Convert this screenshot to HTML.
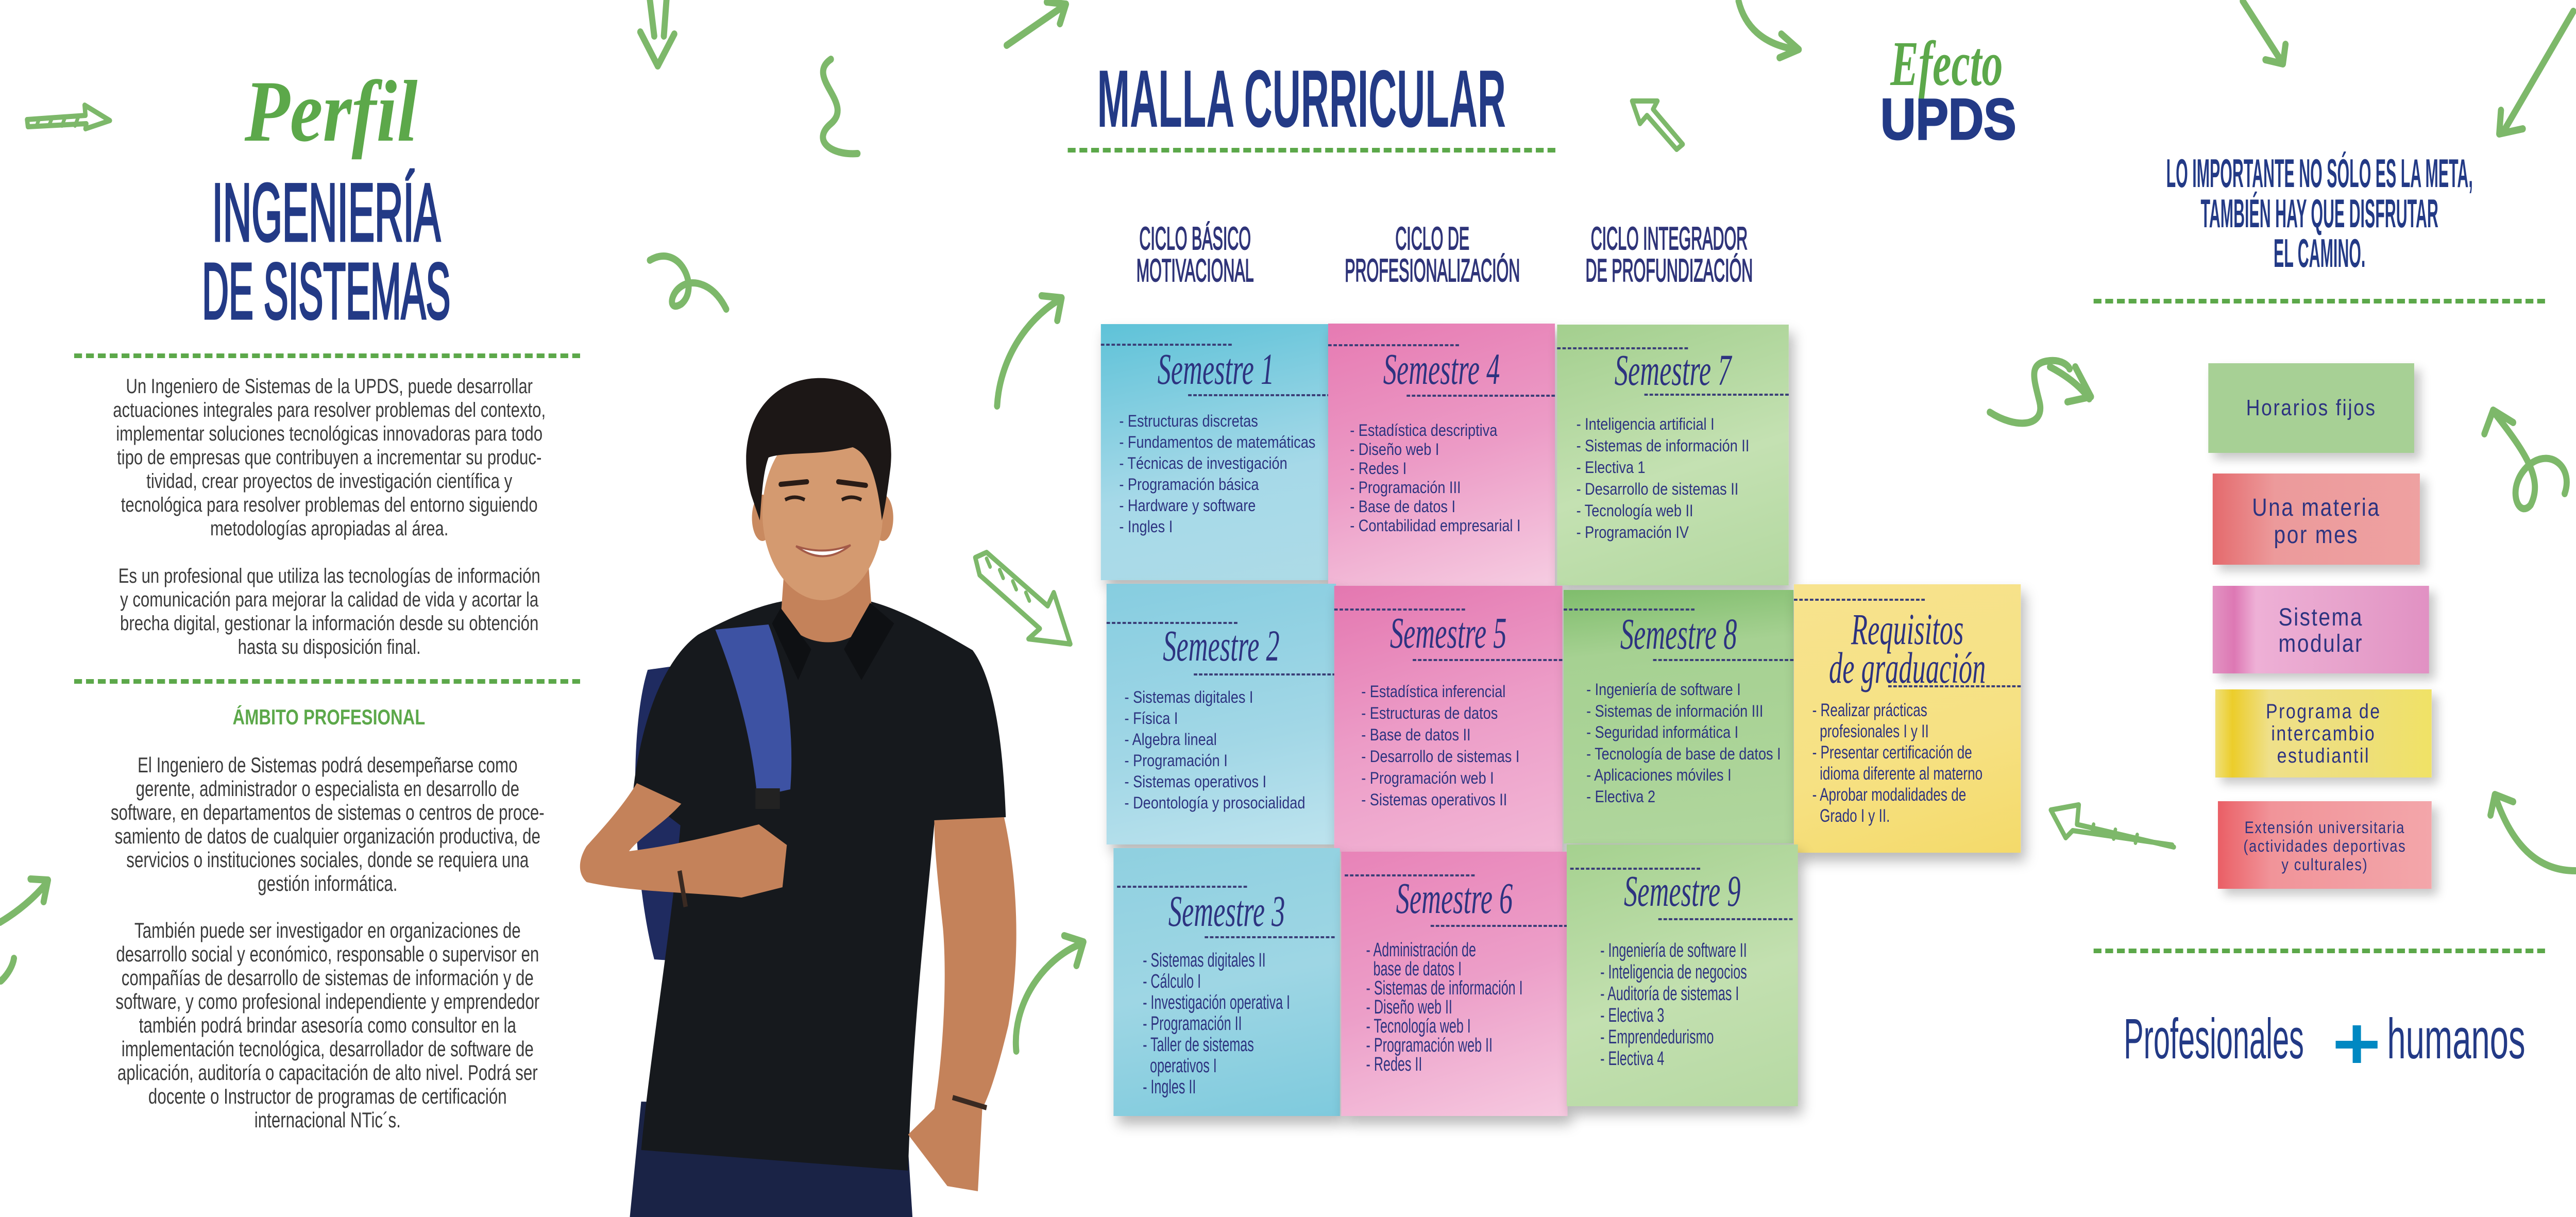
<!DOCTYPE html>
<html><head><meta charset="utf-8">
<style>
*{margin:0;padding:0;box-sizing:border-box}
html,body{width:100%;height:100%;background:#fff;overflow:hidden;font-family:"Liberation Sans",sans-serif}
#root{position:absolute;left:0;top:0;width:5906px;height:2362px;overflow:hidden;background:#fff;transform-origin:0 0}
.a{position:absolute;white-space:nowrap}
.cx{transform-origin:50% 0}
.dg{position:absolute;height:0;border-top:9px dashed #5ca84a}
.n{position:absolute;box-shadow:10px 16px 26px rgba(0,0,0,.28)}
.n .d{position:absolute;height:0;border-top:4px dashed #3b3f78}
.n .t{position:absolute;left:0;right:0;text-align:center;font:italic 86px/80px "Liberation Serif",serif;color:#2d3380;transform:scaleX(.72);transform-origin:50% 0;white-space:nowrap}
.n .l{position:absolute;font-size:32px;color:#2d3380;white-space:nowrap;transform-origin:0 0}
.n .l.c{font-size:38px;transform:scaleX(.78)}
.rn{position:absolute;text-align:center;color:#2d3380;box-shadow:14px 12px 20px rgba(0,0,0,.22);font-family:"Liberation Sans",sans-serif;letter-spacing:3px;white-space:nowrap;overflow:hidden}
.p{position:absolute;text-align:center;color:#3b3b3b;white-space:nowrap;transform-origin:50% 0}
</style></head><body><div id="root">

<svg class="a" style="left:0;top:0" width="5906" height="2362" viewBox="0 0 5906 2362">
<g fill="none" stroke="#7db86a" stroke-width="14" stroke-linecap="round" stroke-linejoin="round">
<path d="M62,232 L196,224 L194,204 L252,234 L196,250 L198,240 L64,246 Z" stroke-width="10"/>
<path d="M90,230 L84,244 M120,228 L112,244 M150,226 L142,244 M180,226 L172,244" stroke-width="8"/>
<path d="M1490,0 L1500,70 M1528,0 L1522,70 M1468,62 L1508,128 L1546,66"/>
<path d="M1905,115 C1845,150 1960,200 1905,240 C1860,272 1905,302 1966,298"/>
<path d="M1490,505 C1560,470 1605,560 1562,590 C1522,612 1540,540 1600,550 C1632,556 1652,578 1665,600"/>
<path d="M2286,788 C2292,700 2350,622 2428,582 M2388,574 L2434,578 L2424,622"/>
<path d="M2236,1082 L2262,1072 L2402,1176 L2416,1150 L2454,1250 L2358,1240 L2384,1220 L2246,1116 Z" stroke-width="10"/>
<path d="M2270,1100 L2262,1084 M2300,1122 L2292,1106 M2330,1144 L2322,1128 M2360,1166 L2352,1150" stroke-width="8"/>
<path d="M2330,2040 C2320,1950 2390,1862 2478,1832 M2440,1816 L2484,1828 L2468,1874"/>
<path d="M2308,88 L2438,12 M2400,4 L2444,8 L2430,46"/>
<path d="M3986,2 C4000,50 4040,86 4118,96 M4084,66 L4124,96 L4080,112"/>
<path d="M3742,196 L3800,196 L3790,212 L3858,280 L3844,290 L3776,224 L3760,240 Z" stroke-width="10"/>
<path d="M4562,800 C4620,832 4690,830 4676,780 C4662,732 4650,704 4700,700 C4728,698 4742,710 4745,716"/>
<path d="M5142,2 L5230,118 M5194,116 L5234,124 L5240,86"/>
<path d="M5900,22 L5742,252 M5734,214 L5730,260 L5784,250"/>
<path d="M4700,712 C4740,730 4770,750 4790,774 M4758,712 L4794,770 L4740,780"/>
<path d="M5718,800 C5790,878 5832,930 5802,980 C5772,1010 5742,940 5802,900 C5852,870 5900,910 5880,958 M5696,842 L5716,796 L5762,820"/>
<path d="M4984,1644 L4762,1600 L4766,1562 L4702,1572 L4736,1626 L4752,1612 L4980,1640" stroke-width="10"/>
<path d="M4800,1600 L4796,1618 M4850,1610 L4846,1628 M4900,1620 L4896,1636" stroke-width="8"/>
<path d="M5904,1690 C5820,1690 5760,1642 5722,1548 M5710,1582 L5720,1542 L5762,1556"/>
<path d="M0,1790 C40,1770 80,1742 108,1712 M70,1706 L110,1708 L100,1750"/>
<path d="M2,1904 C20,1890 30,1872 32,1860"/>
</g>
<path d="M1485,1300 C1440,1420 1450,1700 1500,1862 L1642,1870 L1652,1280 Z" fill="#1f2b60"/>
<path d="M1444,2362 L1470,2138 L2076,2150 L2092,2362 Z" fill="#1a2346"/>
<path d="M1600,1232 C1700,1186 1760,1172 1800,1166 L1990,1166 C2060,1180 2150,1222 2230,1262 C2282,1322 2300,1452 2306,1586 L2142,1600 C2120,1800 2092,2000 2082,2272 L1470,2232 C1490,2050 1540,1800 1560,1602 L1452,1532 C1470,1400 1520,1282 1600,1232 Z" fill="#16191d"/>
<path d="M1800,1080 L1990,1080 L2000,1200 C1950,1262 1850,1262 1790,1200 Z" fill="#c4825a"/>
<path d="M1790,1180 L1860,1260 L1830,1320 L1770,1210 Z M1995,1170 L1935,1260 L1975,1320 L2050,1210 Z" fill="#0e1013"/>
<ellipse cx="1748" cy="1005" rx="24" ry="45" fill="#c98a60"/>
<ellipse cx="2024" cy="1005" rx="24" ry="45" fill="#c98a60"/>
<ellipse cx="1886" cy="995" rx="138" ry="170" fill="#d49a70"/>
<path d="M1722,960 C1680,830 1760,738 1870,734 C1965,730 2055,780 2042,905 C2034,960 2028,990 2022,1010 C2010,920 1990,880 1955,868 C1880,885 1800,876 1762,888 C1748,920 1746,970 1742,1010 Z" fill="#1c1716"/>
<path d="M1790,940 L1850,935 M1922,935 L1985,942" stroke="#2a1c16" stroke-width="10" stroke-linecap="round"/>
<path d="M1800,970 Q1822,960 1845,970 M1930,970 Q1952,960 1975,970" stroke="#2a1c16" stroke-width="7" fill="none"/>
<path d="M1825,1060 Q1888,1100 1950,1058 Q1888,1078 1825,1060 Z" fill="#fff" stroke="#a35a48" stroke-width="4"/>
<path d="M1460,1520 L1562,1560 C1520,1600 1470,1622 1442,1652 C1560,1640 1680,1612 1740,1600 L1804,1640 L1794,1722 L1700,1742 C1600,1732 1450,1732 1345,1712 C1320,1692 1330,1662 1345,1642 C1390,1600 1430,1562 1460,1520 Z" fill="#c4825a"/>
<path d="M1640,1222 L1762,1212 C1802,1300 1822,1420 1812,1532 L1736,1546 C1722,1420 1682,1312 1640,1222 Z" fill="#3d52a3"/>
<rect x="1732" y="1530" width="56" height="40" fill="#222"/>
<path d="M2142,1592 L2302,1586 C2332,1700 2342,1850 2312,1990 C2292,2060 2272,2120 2252,2152 L2242,2312 L2172,2302 L2082,2202 L2142,2152 C2162,2052 2172,1902 2162,1802 C2152,1722 2142,1652 2142,1592 Z" fill="#c4825a"/>
<path d="M1558,1690 L1572,1760 M2184,2130 L2262,2150" stroke="#3a2a22" stroke-width="10"/>
</svg>

<div class="a" style="left:759px;top:131px;transform:translateX(-50%);font:italic bold 170px/170px 'Liberation Serif',serif;color:#5ca84a">Perfil</div>
<div class="a cx" style="left:748px;top:333px;transform:translateX(-50%) scaleX(.57);font:159px/159px 'Liberation Sans',sans-serif;color:#233a86;-webkit-text-stroke:5px #233a86">INGENIERÍA</div>
<div class="a cx" style="left:748px;top:488px;transform:translateX(-50%) scaleX(.55);font:154px/154px 'Liberation Sans',sans-serif;color:#233a86;-webkit-text-stroke:5px #233a86">DE SISTEMAS</div>
<div class="dg" style="left:170px;top:686px;width:1160px"></div>
<div class="p" style="left:55px;top:727px;width:1400px;font-size:40px;line-height:46px;transform:scaleX(.92)">Un Ingeniero de Sistemas de la UPDS, puede desarrollar<br>actuaciones integrales para resolver problemas del contexto,<br>implementar soluciones tecnológicas innovadoras para todo<br>tipo de empresas que contribuyen a incrementar su produc-<br>tividad, crear proyectos de investigación científica y<br>tecnológica para resolver problemas del entorno siguiendo<br>metodologías apropiadas al área.</div>
<div class="p" style="left:55px;top:1095px;width:1400px;font-size:40px;line-height:46px;transform:scaleX(.92)">Es un profesional que utiliza las tecnologías de información<br>y comunicación para mejorar la calidad de vida y acortar la<br>brecha digital, gestionar la información desde su obtención<br>hasta su disposición final.</div>
<div class="dg" style="left:170px;top:1318px;width:1160px"></div>
<div class="a cx" style="left:754px;top:1368px;transform:translateX(-50%) scaleX(.92);font:bold 42px/48px 'Liberation Sans',sans-serif;color:#5ca84a">ÁMBITO PROFESIONAL</div>
<div class="p" style="left:51px;top:1462px;width:1400px;font-size:42px;line-height:46px;transform:scaleX(.88)">El Ingeniero de Sistemas podrá desempeñarse como<br>gerente, administrador o especialista en desarrollo de<br>software, en departamentos de sistemas o centros de proce-<br>samiento de datos de cualquier organización productiva, de<br>servicios o instituciones sociales, donde se requiera una<br>gestión informática.</div>
<div class="p" style="left:51px;top:1783px;width:1400px;font-size:42px;line-height:46px;transform:scaleX(.88)">También puede ser investigador en organizaciones de<br>desarrollo social y económico, responsable o supervisor en<br>compañías de desarrollo de sistemas de información y de<br>software, y como profesional independiente y emprendedor<br>también podrá brindar asesoría como consultor en la<br>implementación tecnológica, desarrollador de software de<br>aplicación, auditoría o capacitación de alto nivel. Podrá ser<br>docente o Instructor de programas de certificación<br>internacional NTic´s.</div>

<div class="a cx" style="left:2984px;top:113px;transform:translateX(-50%) scaleX(.57);font:bold 158px/158px 'Liberation Sans',sans-serif;color:#233a86">MALLA CURRICULAR</div>
<div class="dg" style="left:2448px;top:287px;width:1118px"></div>
<div class="a cx" style="left:2740px;top:433px;transform:translateX(-50%) scaleX(.58);font:62px/62px 'Liberation Sans',sans-serif;color:#2f3479;-webkit-text-stroke:2px #2f3479;text-align:center">CICLO BÁSICO<br>MOTIVACIONAL</div>
<div class="a cx" style="left:3284px;top:433px;transform:translateX(-50%) scaleX(.58);font:62px/62px 'Liberation Sans',sans-serif;color:#2f3479;-webkit-text-stroke:2px #2f3479;text-align:center">CICLO DE<br>PROFESIONALIZACIÓN</div>
<div class="a cx" style="left:3827px;top:433px;transform:translateX(-50%) scaleX(.58);font:62px/62px 'Liberation Sans',sans-serif;color:#2f3479;-webkit-text-stroke:2px #2f3479;text-align:center">CICLO INTEGRADOR<br>DE PROFUNDIZACIÓN</div>

<div class="n" style="left:2524px;top:629px;width:527px;height:497px;background:linear-gradient(170deg,#5ec2d8,#a6d9e8 60%,#addbe7)">
<div class="d" style="top:38px;left:0;width:300px"></div><div class="t" style="top:47px">Semestre 1</div><div class="d" style="top:136px;left:200px;right:0"></div>
<div class="l" style="top:168px;left:42px;line-height:41px">- Estructuras discretas<br>- Fundamentos de matemáticas<br>- Técnicas de investigación<br>- Programación básica<br>- Hardware y software<br>- Ingles I</div></div>

<div class="n" style="left:3045px;top:628px;width:520px;height:512px;background:linear-gradient(165deg,#e67ab2,#ec9bc6 50%,#f6cde2)">
<div class="d" style="top:40px;left:0;width:300px"></div><div class="t" style="top:48px">Semestre 4</div><div class="d" style="top:138px;left:180px;right:0"></div>
<div class="l" style="top:189px;left:50px;line-height:37px">- Estadística descriptiva<br>- Diseño web I<br>- Redes I<br>- Programación III<br>- Base de datos I<br>- Contabilidad empresarial I</div></div>

<div class="n" style="left:3570px;top:630px;width:531px;height:506px;background:linear-gradient(165deg,#a3cf8e,#c4e1b2 55%,#b3d8a0)">
<div class="d" style="top:44px;left:0;width:300px"></div><div class="t" style="top:48px">Semestre 7</div><div class="d" style="top:134px;left:200px;right:0"></div>
<div class="l" style="top:172px;left:44px;line-height:42px">- Inteligencia artificial I<br>- Sistemas de información II<br>- Electiva 1<br>- Desarrollo de sistemas II<br>- Tecnología web II<br>- Programación IV</div></div>

<div class="n" style="left:2537px;top:1133px;width:526px;height:506px;background:linear-gradient(170deg,#86cde0,#a2d7e6 60%,#bde3ee)">
<div class="d" style="top:74px;left:0;width:300px"></div><div class="t" style="top:80px">Semestre 2</div><div class="d" style="top:174px;left:200px;right:0"></div>
<div class="l" style="top:200px;left:41px;line-height:41px">- Sistemas digitales I<br>- Física I<br>- Algebra lineal<br>- Programación I<br>- Sistemas operativos I<br>- Deontología y prosocialidad</div></div>

<div class="n" style="left:3059px;top:1137px;width:523px;height:516px;background:linear-gradient(165deg,#e477b0,#ec9cc7 50%,#f2b7d6)">
<div class="d" style="top:44px;left:0;width:300px"></div><div class="t" style="top:51px">Semestre 5</div><div class="d" style="top:142px;left:180px;right:0"></div>
<div class="l" style="top:184px;left:62px;line-height:42px">- Estadística inferencial<br>- Estructuras de datos<br>- Base de datos II<br>- Desarrollo de sistemas I<br>- Programación web I<br>- Sistemas operativos II</div></div>

<div class="n" style="left:3585px;top:1145px;width:527px;height:492px;background:linear-gradient(175deg,#7fbd6c,#a6d192 25%,#b0d69d)">
<div class="d" style="top:36px;left:0;width:300px"></div><div class="t" style="top:45px">Semestre 8</div><div class="d" style="top:134px;left:205px;right:0"></div>
<div class="l" style="top:173px;left:52px;line-height:41.5px">- Ingeniería de software I<br>- Sistemas de información III<br>- Seguridad informática I<br>- Tecnología de base de datos I<br>- Aplicaciones móviles I<br>- Electiva 2</div></div>

<div class="n" style="left:4113px;top:1134px;width:520px;height:521px;background:linear-gradient(165deg,#f7e38e,#f6e183 60%,#f4da6a)">
<div class="d" style="top:28px;left:0;width:300px"></div>
<div class="t" style="top:50px;line-height:75px">Requisitos<br>de graduación</div>
<div class="d" style="top:196px;left:216px;right:0"></div>
<div class="l" style="top:224px;left:42px;line-height:41px;font-size:35px;transform:scaleX(.88)">- Realizar prácticas<br>&nbsp;&nbsp;profesionales I y II<br>- Presentar certificación de<br>&nbsp;&nbsp;idioma diferente al materno<br>- Aprobar modalidades de<br>&nbsp;&nbsp;Grado I y II.</div></div>

<div class="n" style="left:2553px;top:1646px;width:519px;height:520px;background:linear-gradient(170deg,#8fd0e0,#9ed6e4 50%,#7ecadd)">
<div class="d" style="top:73px;left:8px;width:298px"></div><div class="t" style="top:82px">Semestre 3</div><div class="d" style="top:171px;left:209px;right:12px"></div>
<div class="l c" style="top:198px;left:67px;line-height:41px">- Sistemas digitales II<br>- Cálculo I<br>- Investigación operativa I<br>- Programación II<br>- Taller de sistemas<br>&nbsp;&nbsp;operativos I<br>- Ingles II</div></div>

<div class="n" style="left:3075px;top:1653px;width:519px;height:513px;background:linear-gradient(165deg,#e883b8,#ec9ec8 50%,#f6c9e0)">
<div class="d" style="top:44px;left:8px;width:298px"></div><div class="t" style="top:50px">Semestre 6</div><div class="d" style="top:142px;left:205px;right:0"></div>
<div class="l c" style="top:173px;left:57px;line-height:37px">- Administración de<br>&nbsp;&nbsp;base de datos I<br>- Sistemas de información I<br>- Diseño web II<br>- Tecnología web I<br>- Programación web II<br>- Redes II</div></div>

<div class="n" style="left:3592px;top:1639px;width:530px;height:508px;background:linear-gradient(165deg,#a5d18f,#c3e0b0 55%,#b6d9a3)">
<div class="d" style="top:45px;left:8px;width:298px"></div><div class="t" style="top:50px">Semestre 9</div><div class="d" style="top:143px;left:210px;right:12px"></div>
<div class="l c" style="top:185px;left:77px;line-height:42px">- Ingeniería de software II<br>- Inteligencia de negocios<br>- Auditoría de sistemas I<br>- Electiva 3<br>- Emprendedurismo<br>- Electiva 4</div></div>

<div class="a cx" style="left:4463px;top:62px;transform:translateX(-50%) scaleX(.78);font:italic bold 124px/124px 'Liberation Serif',serif;color:#5ca84a">Efecto</div>
<div class="a cx" style="left:4467px;top:176px;transform:translateX(-50%);font:bold 112px/112px 'Liberation Sans',sans-serif;color:#233a86;-webkit-text-stroke:3px #233a86">UPDS</div>
<div class="a" style="left:4518px;top:298px;width:1600px;text-align:center;transform:scaleX(.46);transform-origin:50% 0;font:bold 78px/77.5px 'Liberation Sans',sans-serif;color:#233a86">LO IMPORTANTE NO SÓLO ES LA META,<br>TAMBIÉN HAY QUE DISFRUTAR<br>EL CAMINO.</div>
<div class="dg" style="left:4800px;top:580px;width:1035px"></div>

<div class="rn" style="left:5063px;top:705px;width:472px;height:174px;background:#a7d095;font-size:44px;line-height:174px">Horarios fijos</div>
<div class="rn" style="left:5073px;top:919px;width:475px;height:177px;background:linear-gradient(90deg,#e46a6d,#ec9a9b 30%,#eea1a1);font-size:48px;line-height:53px;padding-top:40px">Una materia<br>por mes</div>
<div class="rn" style="left:5073px;top:1137px;width:496px;height:170px;background:linear-gradient(90deg,#e293c2,#dd78b4 10%,#eeb0d6 20%,#e7a3cc 60%,#e191c3);font-size:48px;line-height:51px;padding-top:36px">Sistema<br>modular</div>
<div class="rn" style="left:5079px;top:1338px;width:496px;height:171px;background:linear-gradient(90deg,#efe07a,#eccd2a 8%,#efe08a 25%,#eedf78 70%,#f0e266);font-size:40px;line-height:43px;padding-top:22px">Programa de<br>intercambio<br>estudiantil</div>
<div class="rn" style="left:5085px;top:1555px;width:490px;height:170px;background:linear-gradient(90deg,#ea5f66,#f19499 25%,#f3a6aa);font-size:32px;line-height:36px;padding-top:33px;letter-spacing:2px">Extensión universitaria<br>(actividades deportivas<br>y culturales)</div>

<div class="dg" style="left:4800px;top:1841px;width:1035px"></div>
<div class="a" style="left:4869px;top:1962px;width:470px;overflow:hidden"><span style="display:inline-block;transform:scaleX(.62);transform-origin:0 0;font:110px/110px 'Liberation Sans',sans-serif;color:#233a86">Profesionales</span></div>
<div class="a" style="left:5394px;top:1990px;width:19px;height:73px;background:#0088c2"></div>
<div class="a" style="left:5355px;top:2020px;width:96px;height:15px;background:#0088c2"></div>
<div class="a" style="left:5473px;top:1962px;width:330px;overflow:hidden"><span style="display:inline-block;transform:scaleX(.7);transform-origin:0 0;font:110px/110px 'Liberation Sans',sans-serif;color:#233a86">humanos</span></div>

</div>
<script>
(function(){
  var r=document.getElementById('root');
  function fit(){
    var w=window.innerWidth||document.documentElement.clientWidth||5906;
    var h=window.innerHeight||document.documentElement.clientHeight||2362;
    var sx=w/5906, sy=h/2362;
    if(Math.abs(sx-1)<0.001&&Math.abs(sy-1)<0.001){r.style.transform='none';}
    else{r.style.transform='scale('+sx+','+sy+')';}
  }
  fit();
  window.addEventListener('resize',fit);
})();
</script>
</body></html>
